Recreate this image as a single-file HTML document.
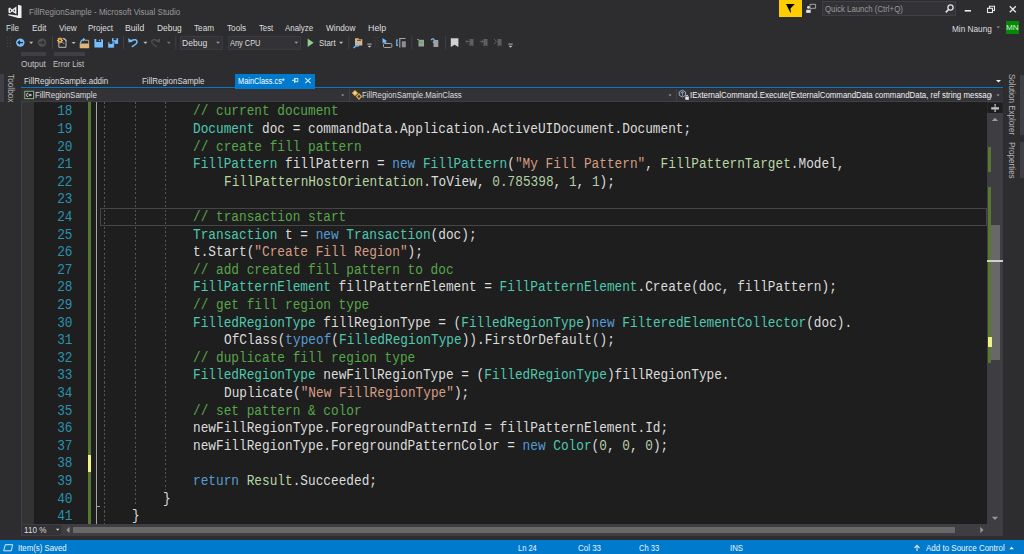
<!DOCTYPE html>
<html><head><meta charset="utf-8"><style>
html,body{margin:0;padding:0}
body{width:1024px;height:554px;overflow:hidden;background:#2D2D30;position:relative;font-family:"Liberation Sans",sans-serif}
div{position:absolute;box-sizing:border-box}
.ut{white-space:pre;line-height:10px;height:10px;transform-origin:0 0}
.ln{left:34px;width:38.5px;text-align:right;color:#2B91AF;font-family:"Liberation Mono",monospace;font-size:13.800px;line-height:17.6px;height:17.6px;white-space:pre;transform-origin:100% 0;transform:scaleX(0.9257)}
.cl{font-family:"Liberation Mono",monospace;font-size:13.800px;line-height:17.6px;height:17.6px;white-space:pre;transform-origin:0 0;transform:scaleX(0.9257)}
.gd{width:1px;background:repeating-linear-gradient(to bottom,#555555 0,#555555 2px,transparent 2px,transparent 4.3px)}
svg{position:absolute;overflow:visible}
</style></head><body>

<svg style="left:0;top:0" width="1024" height="40">
 <!-- VS logo -->
 <path d="M18 4.8 L21.5 5.8 L21.5 17.9 L18.2 17.9 L8.2 15.2 L8.2 14.3 L18 15.6 Z" fill="#F0F0F0"/>
 <path d="M8.5 8.6 L10.2 7.4 L16.3 11.8 L16.3 6.9 L16.3 14 L10.2 9.9 L8.5 12.4 Z" fill="none"/>
 <path d="M8.5 8.3 L9.8 7.6 L12.2 9.6 L16.4 6.6 L16.4 14.2 L12.2 11.4 L9.8 13.3 L8.5 12.6 Z M10 9.1 L10 11.9 L11.3 10.5 Z M13.3 10.5 L14.9 11.8 L14.9 9.2 Z" fill="#F0F0F0" fill-rule="evenodd"/>
</svg>
<div class="ut" style="left:29.06px;top:6.65px;color:#999999;font-size:8.5px;transform:scaleX(0.9426);">FillRegionSample - Microsoft Visual Studio</div>
<div style="left:822px;top:1px;width:134px;height:15px;background:#333337;border:1px solid #3F3F46"></div>
<div style="left:779px;top:0;width:23px;height:17px;background:#FFCC00"></div>
<svg style="left:0;top:0" width="1024" height="40">
 <path d="M786 4 L794.8 4 L790.4 8.6 L791 12.6 L790.3 12.6 Z" fill="#000000"/>
 <path d="M810 4.3 L815.6 4.3 L815.6 8.3 L812 8.3 L810.8 9.3 L810.8 8.3 L810 8.3 Z" fill="none" stroke="#B0B0B0" stroke-width="0.9"/>
 <circle cx="808.4" cy="7.4" r="1.4" fill="#E0E0E0"/>
 <path d="M806.2 9.8 L810.7 9.8 L810.7 12.9 L806.2 12.9 Z" fill="#E0E0E0"/>
 <!-- search -->
 <circle cx="950.5" cy="7.5" r="2.6" fill="none" stroke="#E0E0E0" stroke-width="1.3"/>
 <path d="M948.7 9.4 L945.8 12.4" stroke="#E0E0E0" stroke-width="1.6"/>
 <!-- min restore close -->
 <rect x="964.7" y="10" width="6.3" height="1.6" fill="#E8E8E8"/>
 <rect x="987.5" y="8.3" width="5" height="4.2" fill="none" stroke="#E8E8E8" stroke-width="1.1"/>
 <path d="M989.5 8 L989.5 6.3 L994.5 6.3 L994.5 10.5 L992.8 10.5" fill="none" stroke="#E8E8E8" stroke-width="1.1"/>
 <path d="M1009.8 6.3 L1015.8 12.3 M1015.8 6.3 L1009.8 12.3" stroke="#E8E8E8" stroke-width="1.3"/>
 <!-- user dropdown -->
 <path d="M996.5 26.5 L1000 26.5 L998.25 28.3 Z" fill="#999"/>
</svg>
<div class="ut" style="left:825.41px;top:3.75px;color:#999999;font-size:8.5px;transform:scaleX(0.9176);">Quick Launch (Ctrl+Q)</div>
<div class="ut" style="left:951.54px;top:23.75px;color:#DEDEDE;font-size:8.5px;transform:scaleX(0.9683);">Min Naung</div>
<div style="left:1005.7px;top:21px;width:13.6px;height:13px;background:#068A06"></div>
<div class="ut" style="left:1006.35px;top:22.81px;color:#D8F0D8;font-size:7.2px;transform:scaleX(1.1291);">MN</div>
<div class="ut" style="left:6.16px;top:22.65px;color:#DEDEDE;font-size:8.5px;transform:scaleX(0.9475);">File</div>
<div class="ut" style="left:31.53px;top:22.65px;color:#DEDEDE;font-size:8.5px;transform:scaleX(0.9828);">Edit</div>
<div class="ut" style="left:58.60px;top:22.65px;color:#DEDEDE;font-size:8.5px;transform:scaleX(0.9631);">View</div>
<div class="ut" style="left:88.26px;top:22.65px;color:#DEDEDE;font-size:8.5px;transform:scaleX(0.9474);">Project</div>
<div class="ut" style="left:125.31px;top:22.65px;color:#DEDEDE;font-size:8.5px;transform:scaleX(1.0181);">Build</div>
<div class="ut" style="left:157.13px;top:22.65px;color:#DEDEDE;font-size:8.5px;transform:scaleX(0.9874);">Debug</div>
<div class="ut" style="left:194.44px;top:22.65px;color:#DEDEDE;font-size:8.5px;transform:scaleX(0.9621);">Team</div>
<div class="ut" style="left:226.64px;top:22.65px;color:#DEDEDE;font-size:8.5px;transform:scaleX(0.9649);">Tools</div>
<div class="ut" style="left:258.65px;top:22.65px;color:#DEDEDE;font-size:8.5px;transform:scaleX(0.9100);">Test</div>
<div class="ut" style="left:285.30px;top:22.65px;color:#DEDEDE;font-size:8.5px;transform:scaleX(0.9325);">Analyze</div>
<div class="ut" style="left:325.60px;top:22.65px;color:#DEDEDE;font-size:8.5px;transform:scaleX(0.9716);">Window</div>
<div class="ut" style="left:367.89px;top:22.65px;color:#DEDEDE;font-size:8.5px;transform:scaleX(1.0431);">Help</div>
<div style="left:180.3px;top:36px;width:43px;height:14px;background:#333337;border:1px solid #3A3A40"></div>
<div style="left:227.7px;top:36px;width:73.5px;height:14px;background:#333337;border:1px solid #3A3A40"></div>
<svg style="left:0;top:0" width="1024" height="60">
 <g fill="#46464A">
  <rect x="7" y="37" width="1" height="1"/><rect x="10" y="37" width="1" height="1"/>
  <rect x="7" y="40" width="1" height="1"/><rect x="10" y="40" width="1" height="1"/>
  <rect x="7" y="43" width="1" height="1"/><rect x="10" y="43" width="1" height="1"/>
  <rect x="7" y="46" width="1" height="1"/><rect x="10" y="46" width="1" height="1"/>
  <rect x="374.5" y="37" width="1" height="1"/><rect x="377.3" y="37" width="1" height="1"/>
  <rect x="374.5" y="40" width="1" height="1"/><rect x="377.3" y="40" width="1" height="1"/>
  <rect x="374.5" y="43" width="1" height="1"/><rect x="377.3" y="43" width="1" height="1"/>
  <rect x="374.5" y="46" width="1" height="1"/><rect x="377.3" y="46" width="1" height="1"/>
 </g>
 <!-- back / forward -->
 <circle cx="20.3" cy="42.6" r="4.2" fill="#75BEFF"/>
 <path d="M23 42.6 L18.3 42.6 M20 40.8 L18.2 42.6 L20 44.4" stroke="#252526" stroke-width="1.3" fill="none"/>
 <path d="M29.2 41.7 L33.2 41.7 L31.2 43.9 Z" fill="#BEBEBE"/>
 <circle cx="42" cy="42.6" r="4.2" fill="#505053"/>
 <path d="M39.3 42.6 L44 42.6 M42.3 40.8 L44.1 42.6 L42.3 44.4" stroke="#2D2D30" stroke-width="1.3" fill="none"/>
 <!-- separators -->
 <g fill="#3F3F46">
  <rect x="52" y="36" width="1" height="13"/><rect x="123" y="36" width="1" height="13"/>
  <rect x="175.2" y="36" width="1" height="13"/><rect x="348.3" y="36" width="1" height="13"/>
  <rect x="411.3" y="36" width="1" height="13"/><rect x="445" y="36" width="1" height="13"/>
 </g>
 <!-- new project -->
 <path d="M58.8 43 L58.8 47.3 L66 47.3 L66 42.5" fill="none" stroke="#B8B8B8" stroke-width="1"/>
 <path d="M63 38.5 Q66.3 39 66.2 42.3" fill="none" stroke="#B8B8B8" stroke-width="1.3"/>
 <path d="M61.8 41.5 L64.3 44" stroke="#B8B8B8" stroke-width="0.8"/>
 <g fill="#E8B058">
  <circle cx="60" cy="40.4" r="2.2"/>
  <rect x="59.4" y="37.4" width="1.2" height="6"/>
  <rect x="57" y="39.8" width="6" height="1.2"/>
  <rect x="59.4" y="37.4" width="1.2" height="6" transform="rotate(45 60 40.4)"/>
  <rect x="57" y="39.8" width="6" height="1.2" transform="rotate(45 60 40.4)"/>
 </g>
 <circle cx="60" cy="40.4" r="0.8" fill="#2D2D30"/>
 <path d="M71.6 41.9 L75.6 41.9 L73.6 44.1 Z" fill="#BEBEBE"/>
 <!-- open -->
 <path d="M84.5 40.3 L88.7 40.3 L88.7 47.8" fill="none" stroke="#C8A060" stroke-width="1"/>
 <path d="M80 43.6 L88.8 43.6 L89.2 48.2 L80 48.2 Z" fill="#DCB67A"/>
 <path d="M80.2 43.2 L80.2 48" stroke="#DCB67A" stroke-width="1"/>
 <path d="M80.6 43 Q80.8 40 83.5 39.6" fill="none" stroke="#75BEFF" stroke-width="1.3"/>
 <path d="M83 37.7 L85.6 39.6 L83 41.4 Z" fill="#75BEFF"/>
 <!-- save -->
 <path d="M94.4 39 L102 39 L103 40 L103 47.5 L94.4 47.5 Z" fill="#75BEFF"/>
 <rect x="96.3" y="39" width="4.8" height="3" fill="#2D2D30"/>
 <rect x="98.8" y="39.6" width="1.2" height="1.6" fill="#75BEFF"/>
 <!-- save all -->
 <path d="M112 38.2 L118.1 38.2 L118.1 43.8 L112 43.8 Z" fill="#75BEFF"/>
 <rect x="113.5" y="38.2" width="3" height="2" fill="#2D2D30"/>
 <path d="M107.9 41.9 L114.3 41.9 L114.3 48 L107.9 48 Z" fill="#75BEFF" stroke="#2D2D30" stroke-width="0.6"/>
 <rect x="109.4" y="41.9" width="3" height="2" fill="#2D2D30"/>
 <!-- undo -->
 <path d="M130.8 40.6 Q137.2 38.3 137 42.2 Q136.6 44.3 131.8 46.9" fill="none" stroke="#75BEFF" stroke-width="1.5"/>
 <path d="M128.2 38 L128.6 42.6 L133 41.6 Z" fill="#75BEFF"/>
 <path d="M143.4 41.7 L147.4 41.7 L145.4 43.9 Z" fill="#BEBEBE"/>
 <!-- redo -->
 <path d="M157.5 40.3 Q151.5 38.5 151.7 42 Q152 44 156.7 46.8" fill="none" stroke="#505053" stroke-width="1.4"/>
 <path d="M160.3 38 L159.9 42.6 L155.5 41.6 Z" fill="#505053"/>
 <path d="M166.8 41.7 L170.8 41.7 L168.8 43.9 Z" fill="#707070"/>
 <!-- combo arrows -->
 <path d="M216 41.8 L220 41.8 L218 43.8 Z" fill="#999"/>
 <path d="M294.3 41.8 L298.3 41.8 L296.3 43.8 Z" fill="#999"/>
 <!-- play -->
 <path d="M307.7 38.5 L313.6 42.75 L307.7 47 Z" fill="#8CCF8C"/>
 <path d="M339.1 41.8 L343.1 41.8 L341.1 44 Z" fill="#BEBEBE"/>
 <!-- find in files -->
 <path d="M355 38.2 L358.5 38.2 L359.3 39.3 L362.3 39.3 L362.3 45.5 L355 45.5 Z" fill="#DCB67A"/>
 <rect x="357" y="39.8" width="4" height="0.9" fill="#2D2D30"/>
 <circle cx="357.3" cy="44.4" r="1.7" fill="none" stroke="#75BEFF" stroke-width="1.1"/>
 <path d="M356 45.7 L353.6 48" stroke="#75BEFF" stroke-width="1.3"/>
 <!-- overflow -->
 <rect x="367.3" y="43.6" width="4.4" height="0.9" fill="#C0C0C0"/>
 <path d="M367.5 45.7 L371.5 45.7 L369.5 47.8 Z" fill="#C0C0C0"/>
 <rect x="508.3" y="43.6" width="4.4" height="0.9" fill="#C0C0C0"/>
 <path d="M508.5 45.7 L512.5 45.7 L510.5 47.8 Z" fill="#C0C0C0"/>
 <!-- icons 382-406 -->
 <path d="M382.5 38 L382.5 43.5 L384 42.3 L385.5 44 L386.5 43.5 L385.5 41.5 L387.3 41.3 Z" fill="#75BEFF"/>
 <rect x="383.5" y="43.5" width="8.3" height="4" rx="1" fill="none" stroke="#A8A8A8" stroke-width="1"/>
 <path d="M398 40 L396.8 40 L396.8 45.3 L398 45.3" fill="none" stroke="#75BEFF" stroke-width="1.2"/>
 <path d="M399.8 47.5 L399.8 38.5 L405.5 38.5" fill="none" stroke="#A8A8A8" stroke-width="1.1"/>
 <rect x="401.8" y="41.3" width="4" height="6" fill="#909090"/>
 <!-- 417-438 -->
 <rect x="418.5" y="39.8" width="5.5" height="6.7" fill="#A0A0A0"/>
 <path d="M419 41.8 L421 43 L423 41.8" stroke="#3DBE4E" stroke-width="1.3" fill="none"/>
 <rect x="417" y="39" width="2" height="0.8" fill="#A0A0A0"/>
 <path d="M431 40 Q433.5 37.5 434.5 40.5 L433 43" fill="none" stroke="#75BEFF" stroke-width="1.2"/>
 <rect x="433.5" y="40" width="4.8" height="7" fill="#A0A0A0"/>
 <!-- bookmark -->
 <path d="M450.8 38.2 L458.4 38.2 L458.4 47 L454.6 44.8 L450.8 47 Z" fill="#D0D0D0"/>
 <g fill="#5E5E60">
  <path d="M469.5 39 L473.5 39 L473.5 46.5 L471.5 45.2 L469.5 46.5 Z"/>
  <path d="M483.5 39 L487.5 39 L487.5 46.5 L485.5 45.2 L483.5 46.5 Z"/>
  <path d="M497.5 39 L501.5 39 L501.5 46.5 L499.5 45.2 L497.5 46.5 Z"/>
 </g>
 <path d="M465.8 41.5 L469.5 41.5 M467.5 39.8 L465.8 41.5 L467.5 43.2" stroke="#5E5E60" stroke-width="1" fill="none"/>
 <path d="M479.7 41.5 L483.3 41.5 M481.6 39.8 L483.3 41.5 L481.6 43.2" stroke="#5E5E60" stroke-width="1" fill="none"/>
 <path d="M494 39 L496.5 41.5 L494 44" stroke="#5E5E60" stroke-width="1" fill="none"/>
</svg>
<div class="ut" style="left:182.42px;top:37.95px;color:#DEDEDE;font-size:8.5px;transform:scaleX(1.0042);">Debug</div>
<div class="ut" style="left:230.40px;top:37.95px;color:#DEDEDE;font-size:8.5px;transform:scaleX(0.8707);">Any CPU</div>
<div class="ut" style="left:319.31px;top:37.95px;color:#DEDEDE;font-size:8.5px;transform:scaleX(0.9252);">Start</div>
<div style="left:21px;top:52px;width:25px;height:4px;background:#3F3F46"></div>
<div style="left:54px;top:52px;width:31px;height:4px;background:#3F3F46"></div>
<div class="ut" style="left:20.99px;top:59.05px;color:#C4C4C4;font-size:8.5px;transform:scaleX(0.9731);">Output</div>
<div class="ut" style="left:53.39px;top:59.05px;color:#C4C4C4;font-size:8.5px;transform:scaleX(0.9009);">Error List</div>
<div class="ut" style="left:24.26px;top:75.75px;color:#DEDEDE;font-size:8.5px;transform:scaleX(0.9382);">FillRegionSample.addin</div>
<div class="ut" style="left:141.86px;top:75.75px;color:#DEDEDE;font-size:8.5px;transform:scaleX(0.9384);">FillRegionSample</div>
<div style="left:235.3px;top:73.5px;width:80px;height:15px;background:#007ACC"></div>
<div class="ut" style="left:237.81px;top:75.75px;color:#FFFFFF;font-size:8.5px;transform:scaleX(0.8673);">MainClass.cs*</div>
<div style="left:21px;top:87px;width:982px;height:1.3px;background:#007ACC"></div>
<div style="left:21px;top:89px;width:982px;height:13px;background:#333337;border-bottom:1px solid #3F3F46"></div>
<div class="ut" style="left:35.37px;top:89.95px;color:#DEDEDE;font-size:8.5px;transform:scaleX(0.9293);">FillRegionSample</div>
<div class="ut" style="left:362.38px;top:89.95px;color:#DEDEDE;font-size:8.5px;transform:scaleX(0.9183);">FillRegionSample.MainClass</div>
<div style="left:689.9px;top:88px;width:302.5px;height:13px;overflow:hidden"><div class="ut" style="left:0;top:1.95px;color:#F1F1F1;font-size:8.5px;transform:scaleX(0.9276)">IExternalCommand.Execute(ExternalCommandData commandData, ref string message</div></div>
<svg style="left:0;top:0" width="1024" height="110">
 <path d="M292 80.3 L294.5 80.3 M294.6 78 L294.6 83" stroke="#D8ECFA" stroke-width="1"/>
 <rect x="295" y="78.4" width="2.8" height="3.3" fill="none" stroke="#D8ECFA" stroke-width="0.9"/>
 <path d="M305.2 78.2 L310.6 83.2 M310.6 78.2 L305.2 83.2" stroke="#D8ECFA" stroke-width="1.1"/>
 <path d="M996 80 L1001 80 L998.5 82.6 Z" fill="#F0F0F0"/>
 <!-- C# project icon -->
 <rect x="24.8" y="91.3" width="8.8" height="7.3" fill="#1E1E1E" stroke="#8DB27A" stroke-width="1"/>
 <path d="M28.3 93.3 L27 93.3 L26.6 94.9 L27 96.6 L28.3 96.6" fill="none" stroke="#E0E0E0" stroke-width="0.9"/>
 <path d="M29.3 93.8 L29.3 96.2 M30.8 93.8 L30.8 96.2 M28.8 94.5 L31.6 94.5 M28.8 95.6 L31.6 95.6" stroke="#E0E0E0" stroke-width="0.6"/>
 <!-- class icon -->
 <path d="M355 89.9 L358.2 93 L355 96.2 L351.8 93 Z" fill="#DDAA55"/>
 <path d="M355 91.3 L356.8 93 L355 94.8 L353.2 93 Z" fill="#F5E070"/>
 <path d="M359 93.1 L362.2 96.5 L359 99.9 L355.8 96.5 Z" fill="#DDAA55"/>
 <path d="M359 94.8 L360.6 96.5 L359 98.2 L357.4 96.5 Z" fill="#4A3A22"/>
 <!-- method icon -->
 <path d="M682.4 90.2 L685.6 92 L685.6 95.3 L682.4 97 L679.2 95.3 L679.2 92 Z" fill="none" stroke="#8FA8C8" stroke-width="1"/>
 <path d="M682.4 91.8 L682.4 95.8 M680.6 93.3 L682.4 91.8 L684.2 93.3" stroke="#9AB" stroke-width="0.8" fill="none"/>
 <rect x="685.3" y="96.8" width="3.5" height="3" fill="#E8E8E8"/>
 <path d="M686 96.8 L686 95.8 Q687 94.5 688 95.8 L688 96.8" fill="none" stroke="#E8E8E8" stroke-width="0.8"/>
 <!-- nav arrows -->
 <path d="M341 94.5 L344.4 94.5 L342.7 96.2 Z" fill="#999"/>
 <path d="M668.3 94.5 L671.7 94.5 L670 96.2 Z" fill="#999"/>
 <path d="M996.3 94.5 L999.7 94.5 L998 96.2 Z" fill="#999"/>
 <rect x="349" y="89" width="1" height="12" fill="#3F3F46"/>
 <rect x="676" y="89" width="1" height="12" fill="#3F3F46"/>
</svg>
<div style="left:0;top:73.5px;width:4px;height:28px;background:#3F3F46"></div>
<div class="ut" style="left:16.05px;top:73.73px;color:#B4B4B4;font-size:8.5px;transform:rotate(90deg) scaleX(0.9729)">Toolbox</div>
<div style="left:21px;top:102px;width:1px;height:422px;background:#3F3F46"></div>
<div style="left:22px;top:102px;width:12px;height:422px;background:#333333"></div>
<div style="left:34px;top:102px;width:953px;height:422px;background:#1E1E1E"></div>
<div style="left:100px;top:208px;width:886.7px;height:17.5px;border:1.5px solid #464646"></div>
<div style="left:87.7px;top:102px;width:3.7px;height:422px;background:#567830"></div>
<div style="left:87.7px;top:454.70px;width:3.7px;height:17.6px;background:#EFF284"></div>
<div style="left:96px;top:102px;width:1px;height:422px;background:#A5A5A5"></div>
<div style="left:96px;top:506px;width:4px;height:1px;background:#A5A5A5"></div>
<div class="gd" style="left:103.93px;top:102px;height:422.0px"></div>
<div class="gd" style="left:134.59px;top:102px;height:403.5px"></div>
<div class="gd" style="left:165.25px;top:102px;height:387.5px"></div>
<div class="ln" style="top:103.40px">18</div>
<div class="cl" style="top:103.40px;left:193.48px"><span style="color:#57A64A">// current document</span></div>
<div class="ln" style="top:121.00px">19</div>
<div class="cl" style="top:121.00px;left:193.48px"><span style="color:#4EC9B0">Document</span><span style="color:#DCDCDC"> doc = commandData.Application.ActiveUIDocument.Document;</span></div>
<div class="ln" style="top:138.60px">20</div>
<div class="cl" style="top:138.60px;left:193.48px"><span style="color:#57A64A">// create fill pattern</span></div>
<div class="ln" style="top:156.20px">21</div>
<div class="cl" style="top:156.20px;left:193.48px"><span style="color:#4EC9B0">FillPattern</span><span style="color:#DCDCDC"> fillPattern = </span><span style="color:#569CD6">new</span><span style="color:#DCDCDC"> </span><span style="color:#4EC9B0">FillPattern</span><span style="color:#DCDCDC">(</span><span style="color:#D69D85">&quot;My Fill Pattern&quot;</span><span style="color:#DCDCDC">, </span><span style="color:#B8D7A3">FillPatternTarget</span><span style="color:#DCDCDC">.Model,</span></div>
<div class="ln" style="top:173.80px">22</div>
<div class="cl" style="top:173.80px;left:224.14px"><span style="color:#B8D7A3">FillPatternHostOrientation</span><span style="color:#DCDCDC">.ToView, </span><span style="color:#B5CEA8">0.785398</span><span style="color:#DCDCDC">, </span><span style="color:#B5CEA8">1</span><span style="color:#DCDCDC">, </span><span style="color:#B5CEA8">1</span><span style="color:#DCDCDC">);</span></div>
<div class="ln" style="top:191.40px">23</div>
<div class="ln" style="top:209.00px">24</div>
<div class="cl" style="top:209.00px;left:193.48px"><span style="color:#57A64A">// transaction start</span></div>
<div class="ln" style="top:226.60px">25</div>
<div class="cl" style="top:226.60px;left:193.48px"><span style="color:#4EC9B0">Transaction</span><span style="color:#DCDCDC"> t = </span><span style="color:#569CD6">new</span><span style="color:#DCDCDC"> </span><span style="color:#4EC9B0">Transaction</span><span style="color:#DCDCDC">(doc);</span></div>
<div class="ln" style="top:244.20px">26</div>
<div class="cl" style="top:244.20px;left:193.48px"><span style="color:#DCDCDC">t.Start(</span><span style="color:#D69D85">&quot;Create Fill Region&quot;</span><span style="color:#DCDCDC">);</span></div>
<div class="ln" style="top:261.80px">27</div>
<div class="cl" style="top:261.80px;left:193.48px"><span style="color:#57A64A">// add created fill pattern to doc</span></div>
<div class="ln" style="top:279.40px">28</div>
<div class="cl" style="top:279.40px;left:193.48px"><span style="color:#4EC9B0">FillPatternElement</span><span style="color:#DCDCDC"> fillPatternElement = </span><span style="color:#4EC9B0">FillPatternElement</span><span style="color:#DCDCDC">.Create(doc, fillPattern);</span></div>
<div class="ln" style="top:297.00px">29</div>
<div class="cl" style="top:297.00px;left:193.48px"><span style="color:#57A64A">// get fill region type</span></div>
<div class="ln" style="top:314.60px">30</div>
<div class="cl" style="top:314.60px;left:193.48px"><span style="color:#4EC9B0">FilledRegionType</span><span style="color:#DCDCDC"> fillRegionType = (</span><span style="color:#4EC9B0">FilledRegionType</span><span style="color:#DCDCDC">)</span><span style="color:#569CD6">new</span><span style="color:#DCDCDC"> </span><span style="color:#4EC9B0">FilteredElementCollector</span><span style="color:#DCDCDC">(doc).</span></div>
<div class="ln" style="top:332.20px">31</div>
<div class="cl" style="top:332.20px;left:224.14px"><span style="color:#DCDCDC">OfClass(</span><span style="color:#569CD6">typeof</span><span style="color:#DCDCDC">(</span><span style="color:#4EC9B0">FilledRegionType</span><span style="color:#DCDCDC">))</span><span style="color:#DCDCDC">.FirstOrDefault();</span></div>
<div class="ln" style="top:349.80px">32</div>
<div class="cl" style="top:349.80px;left:193.48px"><span style="color:#57A64A">// duplicate fill region type</span></div>
<div class="ln" style="top:367.40px">33</div>
<div class="cl" style="top:367.40px;left:193.48px"><span style="color:#4EC9B0">FilledRegionType</span><span style="color:#DCDCDC"> newFillRegionType = (</span><span style="color:#4EC9B0">FilledRegionType</span><span style="color:#DCDCDC">)fillRegionType.</span></div>
<div class="ln" style="top:385.00px">34</div>
<div class="cl" style="top:385.00px;left:224.14px"><span style="color:#DCDCDC">Duplicate(</span><span style="color:#D69D85">&quot;New FillRegionType&quot;</span><span style="color:#DCDCDC">);</span></div>
<div class="ln" style="top:402.60px">35</div>
<div class="cl" style="top:402.60px;left:193.48px"><span style="color:#57A64A">// set pattern &amp; color</span></div>
<div class="ln" style="top:420.20px">36</div>
<div class="cl" style="top:420.20px;left:193.48px"><span style="color:#DCDCDC">newFillRegionType.ForegroundPatternId = fillPatternElement.Id;</span></div>
<div class="ln" style="top:437.80px">37</div>
<div class="cl" style="top:437.80px;left:193.48px"><span style="color:#DCDCDC">newFillRegionType.ForegroundPatternColor = </span><span style="color:#569CD6">new</span><span style="color:#DCDCDC"> </span><span style="color:#4EC9B0">Color</span><span style="color:#DCDCDC">(</span><span style="color:#B5CEA8">0</span><span style="color:#DCDCDC">, </span><span style="color:#B5CEA8">0</span><span style="color:#DCDCDC">, </span><span style="color:#B5CEA8">0</span><span style="color:#DCDCDC">);</span></div>
<div class="ln" style="top:455.40px">38</div>
<div class="ln" style="top:473.00px">39</div>
<div class="cl" style="top:473.00px;left:193.48px"><span style="color:#569CD6">return</span><span style="color:#DCDCDC"> </span><span style="color:#B8D7A3">Result</span><span style="color:#DCDCDC">.Succeeded;</span></div>
<div class="ln" style="top:490.60px">40</div>
<div class="cl" style="top:490.60px;left:162.82px"><span style="color:#DCDCDC">}</span></div>
<div class="ln" style="top:508.20px">41</div>
<div class="cl" style="top:508.20px;left:132.16px"><span style="color:#DCDCDC">}</span></div>
<div style="left:987px;top:102px;width:16px;height:434px;background:#3E3E42"></div>
<div style="left:991px;top:224.7px;width:8.7px;height:135.3px;background:#686868"></div>
<div style="left:988px;top:146.8px;width:3px;height:25.6px;background:#567830"></div>
<div style="left:988px;top:186.8px;width:3px;height:176.4px;background:#567830"></div>
<div style="left:988px;top:337px;width:3.5px;height:9.7px;background:#EFF284"></div>
<div style="left:987px;top:260.4px;width:16px;height:1.2px;background:#D0D0D0"></div>
<svg style="left:0;top:0" width="1024" height="554">
 <rect x="987.3" y="102.4" width="15.5" height="10.6" fill="#1E1E1E"/>
 <rect x="991.2" y="107.2" width="7.8" height="2.3" fill="#BDBDBD"/>
 <path d="M995.1 104.5 L995.1 111.6" stroke="#BDBDBD" stroke-width="1"/>
 <circle cx="995.1" cy="104.8" r="0.8" fill="#BDBDBD"/><circle cx="995.1" cy="111.3" r="0.8" fill="#BDBDBD"/>
 <path d="M991.8 121 L998.1 121 L994.95 117.7 Z" fill="#999999"/>
 <path d="M991.8 516.8 L998.1 516.8 L994.95 520.1 Z" fill="#999999"/>
</svg>
<div style="left:21px;top:524px;width:966px;height:11.8px;background:#3E3E42"></div>
<div style="left:22.4px;top:525.3px;width:38.6px;height:9.8px;background:#333337"></div>
<div class="ut" style="left:23.83px;top:524.85px;color:#DEDEDE;font-size:8.5px;transform:scaleX(0.9509);">110 %</div>
<div style="left:73px;top:526.7px;width:882.3px;height:6.1px;background:#686868"></div>
<svg style="left:0;top:0" width="1024" height="554">
 <path d="M56 528.8 L59.4 528.8 L57.7 530.7 Z" fill="#E0E0E0"/>
 <path d="M69.5 526.8 L69.5 533 L66.3 529.9 Z" fill="#999999"/>
 <path d="M980.3 526.8 L980.3 533 L983.5 529.9 Z" fill="#999999"/>
</svg>
<div style="left:1020px;top:74.7px;width:4px;height:60.3px;background:#3F3F46"></div>
<div style="left:1020px;top:142px;width:4px;height:36px;background:#3F3F46"></div>
<div class="ut" style="left:1016.75px;top:73.50px;color:#B4B4B4;font-size:8.5px;transform:rotate(90deg) scaleX(0.9443)">Solution Explorer</div>
<div class="ut" style="left:1016.75px;top:141.66px;color:#B4B4B4;font-size:8.5px;transform:rotate(90deg) scaleX(0.9459)">Properties</div>
<div style="left:0;top:539.5px;width:1024px;height:14.5px;background:#007ACC"></div>
<div class="ut" style="left:18.05px;top:542.75px;color:#EEF6FC;font-size:8.5px;transform:scaleX(0.9197);">Item(s) Saved</div>
<div class="ut" style="left:517.70px;top:542.75px;color:#EEF6FC;font-size:8.5px;transform:scaleX(0.8824);">Ln 24</div>
<div class="ut" style="left:578.30px;top:542.75px;color:#EEF6FC;font-size:8.5px;transform:scaleX(0.9370);">Col 33</div>
<div class="ut" style="left:639.32px;top:542.75px;color:#EEF6FC;font-size:8.5px;transform:scaleX(0.8892);">Ch 33</div>
<div class="ut" style="left:729.90px;top:542.75px;color:#EEF6FC;font-size:8.5px;transform:scaleX(0.9150);">INS</div>
<div class="ut" style="left:926.40px;top:542.75px;color:#EEF6FC;font-size:8.5px;transform:scaleX(0.9405);">Add to Source Control</div>
<svg style="left:0;top:0" width="1024" height="554">
 <path d="M5.3 544.7 L12.6 544.7 L11.3 550.8 L3.7 550.8 Z" fill="none" stroke="#D8ECFA" stroke-width="1"/>
 <path d="M917 551 L917 545.5 M914.5 548 L917 545.3 L919.5 548" stroke="#D8D8D8" stroke-width="1.2" fill="none"/>
 <path d="M1009.3 549.3 L1014 549.3 L1011.65 546.8 Z" fill="#FFFFFF"/>
</svg>
</body></html>
